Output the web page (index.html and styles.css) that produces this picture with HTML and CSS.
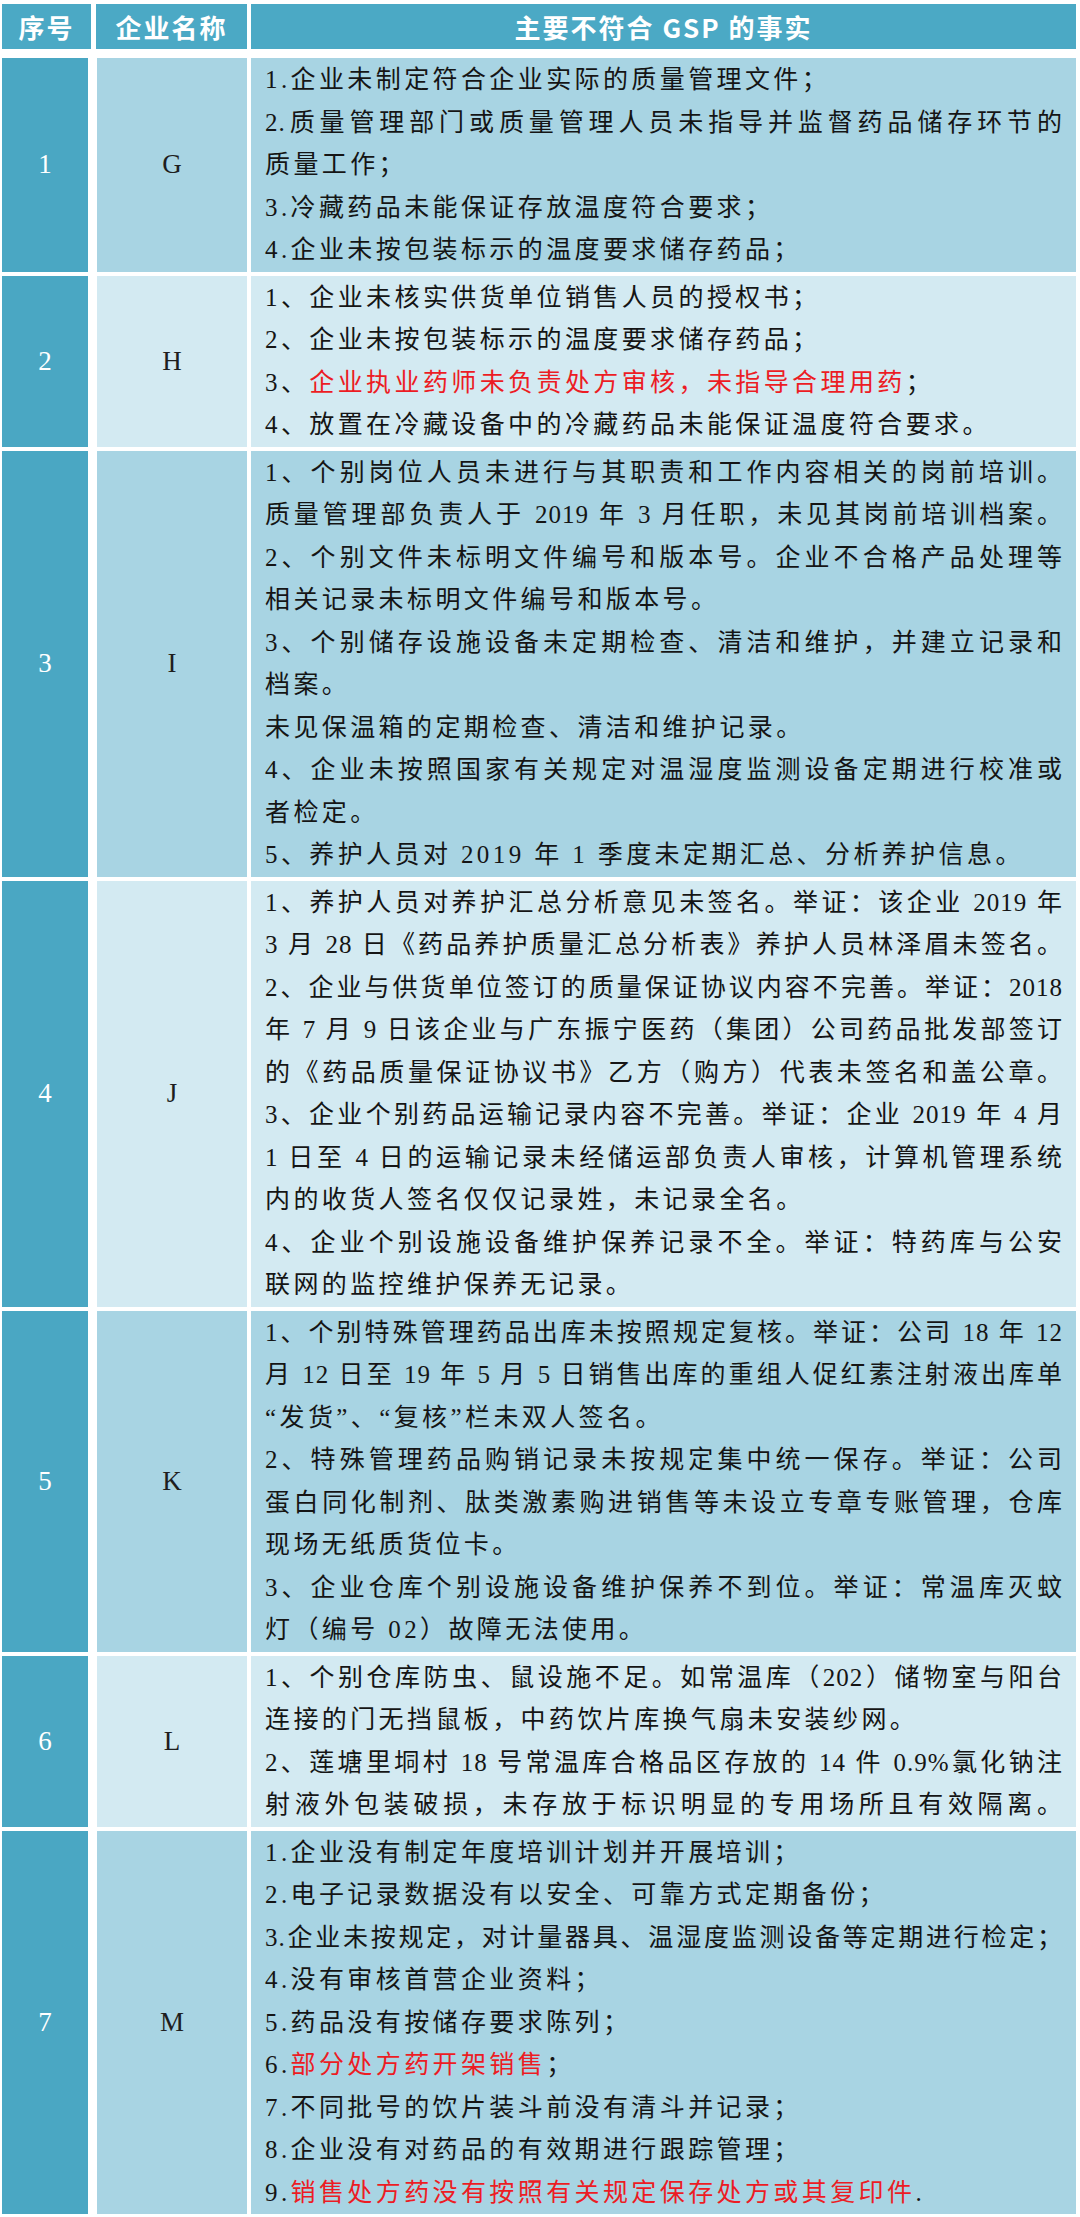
FILE: index.html
```html
<!DOCTYPE html>
<html lang="zh-CN">
<head>
<meta charset="utf-8">
<title>主要不符合 GSP 的事实</title>
<link rel="stylesheet" href="styles.css">
</head>
<body>
<div class="table">
  <div class="head">
    <div class="h h1">序号</div>
    <div class="h h2">企业名称</div>
    <div class="h h3">主要不符合 GSP 的事实</div>
  </div>
  <div class="rows">
    <div class="row odd">
      <div class="c1">1</div>
      <div class="c2">G</div>
      <div class="c3">
        <div class="ln">1.企业未制定符合企业实际的质量管理文件；</div>
        <div class="ln full">2.质量管理部门或质量管理人员未指导并监督药品储存环节的</div>
        <div class="ln">质量工作；</div>
        <div class="ln">3.冷藏药品未能保证存放温度符合要求；</div>
        <div class="ln">4.企业未按包装标示的温度要求储存药品；</div>
      </div>
    </div>
    <div class="row even">
      <div class="c1">2</div>
      <div class="c2">H</div>
      <div class="c3">
        <div class="ln">1、企业未核实供货单位销售人员的授权书；</div>
        <div class="ln">2、企业未按包装标示的温度要求储存药品；</div>
        <div class="ln">3、<span class="red">企业执业药师未负责处方审核，未指导合理用药</span>；</div>
        <div class="ln">4、放置在冷藏设备中的冷藏药品未能保证温度符合要求。</div>
      </div>
    </div>
    <div class="row odd">
      <div class="c1">3</div>
      <div class="c2">I</div>
      <div class="c3">
        <div class="ln full">1、个别岗位人员未进行与其职责和工作内容相关的岗前培训。</div>
        <div class="ln full">质量管理部负责人于 2019 年 3 月任职，未见其岗前培训档案。</div>
        <div class="ln full">2、个别文件未标明文件编号和版本号。企业不合格产品处理等</div>
        <div class="ln">相关记录未标明文件编号和版本号。</div>
        <div class="ln full">3、个别储存设施设备未定期检查、清洁和维护，并建立记录和</div>
        <div class="ln">档案。</div>
        <div class="ln">未见保温箱的定期检查、清洁和维护记录。</div>
        <div class="ln full">4、企业未按照国家有关规定对温湿度监测设备定期进行校准或</div>
        <div class="ln">者检定。</div>
        <div class="ln">5、养护人员对 2019 年 1 季度未定期汇总、分析养护信息。</div>
      </div>
    </div>
    <div class="row even">
      <div class="c1">4</div>
      <div class="c2">J</div>
      <div class="c3">
        <div class="ln full">1、养护人员对养护汇总分析意见未签名。举证：该企业 2019 年</div>
        <div class="ln full">3 月 28 日《药品养护质量汇总分析表》养护人员林泽眉未签名。</div>
        <div class="ln full">2、企业与供货单位签订的质量保证协议内容不完善。举证：2018</div>
        <div class="ln full">年 7 月 9 日该企业与广东振宁医药（集团）公司药品批发部签订</div>
        <div class="ln full">的《药品质量保证协议书》乙方（购方）代表未签名和盖公章。</div>
        <div class="ln full">3、企业个别药品运输记录内容不完善。举证：企业 2019 年 4 月</div>
        <div class="ln full">1 日至 4 日的运输记录未经储运部负责人审核，计算机管理系统</div>
        <div class="ln">内的收货人签名仅仅记录姓，未记录全名。</div>
        <div class="ln full">4、企业个别设施设备维护保养记录不全。举证：特药库与公安</div>
        <div class="ln">联网的监控维护保养无记录。</div>
      </div>
    </div>
    <div class="row odd">
      <div class="c1">5</div>
      <div class="c2">K</div>
      <div class="c3">
        <div class="ln full">1、个别特殊管理药品出库未按照规定复核。举证：公司 18 年 12</div>
        <div class="ln full">月 12 日至 19 年 5 月 5 日销售出库的重组人促红素注射液出库单</div>
        <div class="ln">“发货”、“复核”栏未双人签名。</div>
        <div class="ln full">2、特殊管理药品购销记录未按规定集中统一保存。举证：公司</div>
        <div class="ln full">蛋白同化制剂、肽类激素购进销售等未设立专章专账管理，仓库</div>
        <div class="ln">现场无纸质货位卡。</div>
        <div class="ln full">3、企业仓库个别设施设备维护保养不到位。举证：常温库灭蚊</div>
        <div class="ln">灯（编号 02）故障无法使用。</div>
      </div>
    </div>
    <div class="row even">
      <div class="c1">6</div>
      <div class="c2">L</div>
      <div class="c3">
        <div class="ln full">1、个别仓库防虫、鼠设施不足。如常温库（202）储物室与阳台</div>
        <div class="ln">连接的门无挡鼠板，中药饮片库换气扇未安装纱网。</div>
        <div class="ln full">2、莲塘里垌村 18 号常温库合格品区存放的 14 件 0.9%氯化钠注</div>
        <div class="ln full">射液外包装破损，未存放于标识明显的专用场所且有效隔离。</div>
      </div>
    </div>
    <div class="row odd">
      <div class="c1">7</div>
      <div class="c2">M</div>
      <div class="c3">
        <div class="ln">1.企业没有制定年度培训计划并开展培训；</div>
        <div class="ln">2.电子记录数据没有以安全、可靠方式定期备份；</div>
        <div class="ln full">3.企业未按规定，对计量器具、温湿度监测设备等定期进行检定；</div>
        <div class="ln">4.没有审核首营企业资料；</div>
        <div class="ln">5.药品没有按储存要求陈列；</div>
        <div class="ln">6.<span class="red">部分处方药开架销售</span>；</div>
        <div class="ln">7.不同批号的饮片装斗前没有清斗并记录；</div>
        <div class="ln">8.企业没有对药品的有效期进行跟踪管理；</div>
        <div class="ln">9.<span class="red">销售处方药没有按照有关规定保存处方或其复印件</span>.</div>
      </div>
    </div>
  </div>
</div>
</body>
</html>
```

FILE: styles.css
```css
html, body {
  margin: 0;
  padding: 0;
  background: #ffffff;
}

.table {
  width: 1074px;
  margin-left: 2px;
  padding-top: 4px;
}

.head {
  display: flex;
  height: 45px;
}

.h {
  background: #4ba9c5;
  color: #ffffff;
  font-family: "Noto Sans CJK SC", "Noto Sans", sans-serif;
  font-weight: 700;
  font-size: 26px;
  letter-spacing: 2px;
  display: flex;
  align-items: center;
  justify-content: center;
}

.h1 {
  width: 89px;
  margin-right: 5px;
}

.h2 {
  width: 151px;
  margin-right: 4px;
}

.h3 {
  flex: 1;
}

.rows {
  display: flex;
  flex-direction: column;
  gap: 4px;
  margin-top: 9px;
}

.row {
  display: flex;
}

.c1 {
  width: 86px;
  margin-right: 9px;
  background: #4aa7c3;
  color: #ffffff;
  font-family: "Liberation Serif", serif;
  font-size: 27px;
  display: flex;
  align-items: center;
  justify-content: center;
}

.c2 {
  width: 150px;
  margin-right: 4px;
  color: #1e1e1e;
  font-family: "Liberation Serif", serif;
  font-size: 27px;
  display: flex;
  align-items: center;
  justify-content: center;
}

.c3 {
  flex: 1;
  padding: 1px 13px 0 14px;
  color: #151515;
  font-family: "Liberation Serif", "Noto Sans CJK SC", serif;
  font-size: 25px;
  letter-spacing: 3.4px;
}

.odd .c2,
.odd .c3 {
  background: #a8d4e3;
}

.even .c2,
.even .c3 {
  background: #d3eaf2;
}

.ln {
  line-height: 42.5px;
  height: 42.5px;
  overflow: visible;
}

.full {
  letter-spacing: 1px;
  text-align: justify;
  text-align-last: justify;
}

.red {
  color: #ec1c24;
}
```
